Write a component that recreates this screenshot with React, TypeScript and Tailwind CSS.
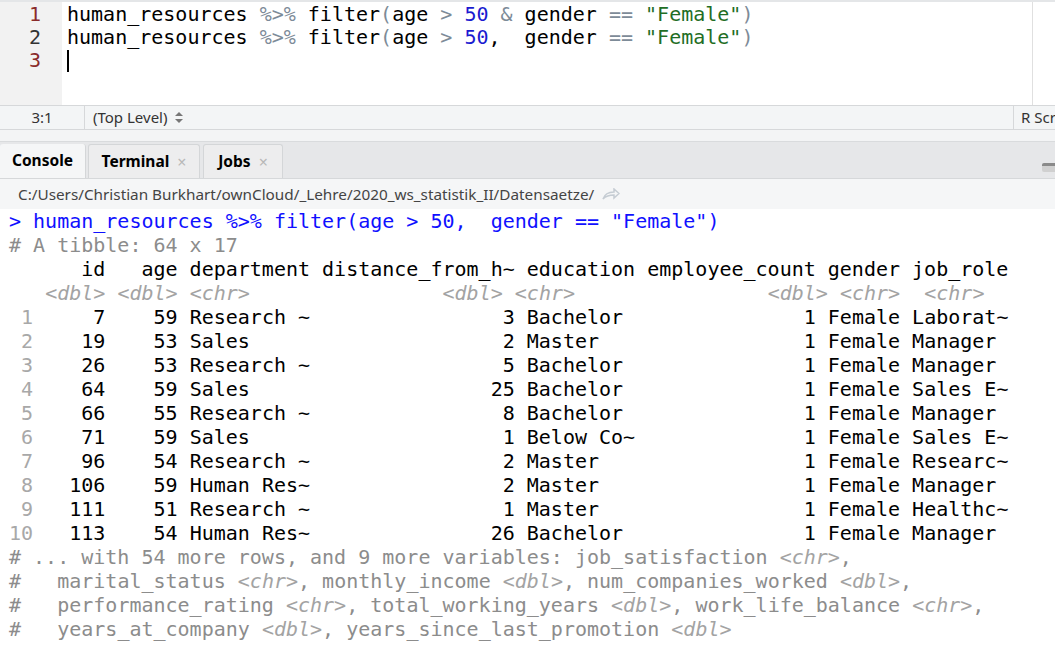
import React from "react";

const mono = "font-['DejaVu_Sans_Mono','Liberation_Mono',monospace] text-[20px]";
const ui = "font-['Segoe_UI','Noto_Sans',sans-serif]";

type Row = [string, string, string, string, string, string, string, string];

const rows: Row[] = [
  ["7", "59", "Research ~", "3", "Bachelor", "1", "Female", "Laborat~"],
  ["19", "53", "Sales", "2", "Master", "1", "Female", "Manager"],
  ["26", "53", "Research ~", "5", "Bachelor", "1", "Female", "Manager"],
  ["64", "59", "Sales", "25", "Bachelor", "1", "Female", "Sales E~"],
  ["66", "55", "Research ~", "8", "Bachelor", "1", "Female", "Manager"],
  ["71", "59", "Sales", "1", "Below Co~", "1", "Female", "Sales E~"],
  ["96", "54", "Research ~", "2", "Master", "1", "Female", "Researc~"],
  ["106", "59", "Human Res~", "2", "Master", "1", "Female", "Manager"],
  ["111", "51", "Research ~", "1", "Master", "1", "Female", "Healthc~"],
  ["113", "54", "Human Res~", "26", "Bachelor", "1", "Female", "Manager"],
];

// tibble column layout: right-aligned numbers, left-aligned text
const fmt = (r: Row) =>
  [
    r[0].padStart(5),
    r[1].padStart(5),
    r[2].padEnd(10),
    r[3].padStart(16),
    r[4].padEnd(9),
    r[5].padStart(14),
    r[6].padEnd(6),
    r[7],
  ].join(" ");

const Op = ({ children }: { children: React.ReactNode }) => (
  <span className="text-[#7d8b98]">{children}</span>
);
const Num = ({ children }: { children: React.ReactNode }) => (
  <span className="text-[#1a1ad0]">{children}</span>
);
const Str = ({ children }: { children: React.ReactNode }) => (
  <span className="text-[#1f6e25]">{children}</span>
);
const T = ({ children }: { children: React.ReactNode }) => (
  <span className="italic text-[#a3a3a3]">{children}</span>
);

const Editor = () => (
  <div className="flex h-[105px] border-t-2 border-[#e4e6e8] bg-white">
    <div className={`w-[62px] bg-[#f2f2f2] pr-[21px] pt-[1px] text-right leading-[23px] ${mono}`}>
      <div className="text-[#8a2b2b]">1</div>
      <div className="text-[#333]">2</div>
      <div className="text-[#8a2b2b]">3</div>
    </div>
    <div className={`flex-1 whitespace-pre pl-[5px] pt-[1px] leading-[23px] text-black ${mono}`}>
      <div>
        human_resources <Op>%&gt;%</Op> filter<Op>(</Op>age <Op>&gt;</Op> <Num>50</Num> <Op>&amp;</Op> gender{" "}
        <Op>==</Op> <Str>"Female"</Str>
        <Op>)</Op>
      </div>
      <div>
        human_resources <Op>%&gt;%</Op> filter<Op>(</Op>age <Op>&gt;</Op> <Num>50</Num>,  gender <Op>==</Op>{" "}
        <Str>"Female"</Str>
        <Op>)</Op>
      </div>
      <div className="flex h-[23px] items-center">
        <div className="h-[22px] w-[2px] bg-black" />
      </div>
    </div>
    <div className="w-[23px] border-l border-[#e0e0e0] bg-white" />
  </div>
);

const StatusBar = () => (
  <div className={`flex h-[25px] items-center border-y border-[#d6d8da] bg-[#f3f5f6] text-[15px] text-[#333] ${ui}`}>
    <div className="flex h-full w-[85px] items-center justify-center border-r border-[#d6d8da]">3:1</div>
    <div className="flex flex-1 items-center gap-2 pl-[8px]">
      (Top Level)
      <svg width="8" height="11" viewBox="0 0 8 11" fill="#777">
        <path d="M4 0 L8 4 H0 Z" />
        <path d="M4 11 L8 7 H0 Z" />
      </svg>
    </div>
    <div className="flex h-full w-[42px] items-center border-l border-[#d6d8da] pl-[7px] whitespace-nowrap overflow-hidden">
      R Script
    </div>
  </div>
);

const Tabs = () => (
  <div className="flex h-[49px] flex-col border-b border-[#d6d8da] bg-[#f3f4f5]">
    <div className="h-[12px] border-b border-[#d9dbdd]" />
    <div className={`flex flex-1 items-end bg-[#e6e7e9] text-[15.5px] font-bold text-black ${ui}`}>
      <div className="flex h-[34px] w-[86px] items-center justify-center rounded-t-[3px] border-r border-[#d4d6d8] bg-[#f5f6f7]">
        Console
      </div>
      <div className="ml-[2px] flex h-[34px] w-[112px] items-center justify-center gap-2 rounded-t-[3px] border border-b-0 border-[#d4d6d8] bg-[#ededee]">
        Terminal <span className="text-[16px] font-normal text-[#b8b8b8]">×</span>
      </div>
      <div className="ml-[3px] flex h-[34px] w-[80px] items-center justify-center gap-2 rounded-t-[3px] border border-b-0 border-[#d4d6d8] bg-[#ededee]">
        Jobs <span className="text-[16px] font-normal text-[#b8b8b8]">×</span>
      </div>
      <div className="flex-1" />
      <div className="mb-[6px] mr-[-2px] h-[9px] w-[15px] rounded-[2px] border-t-[3px] border-[#8a8a8a] bg-[#d0d0d0]" />
    </div>
  </div>
);

const PathBar = () => (
  <div className={`flex h-[31px] items-center gap-2 border-b border-[#d6d8da] bg-[#f5f6f7] pl-[18px] text-[15.3px] text-[#444] ${ui}`}>
    C:/Users/Christian Burkhart/ownCloud/_Lehre/2020_ws_statistik_II/Datensaetze/
    <svg width="18" height="12" viewBox="0 0 18 12" fill="none" stroke="#c5ccd3" strokeWidth="1.5">
      <path d="M1 11 C3 5 7 4 12 4 V1 L17 5.5 L12 10 V7 C7 7 4 8 1 11 Z" />
    </svg>
  </div>
);

const Console = () => (
  <div className={`-mt-[1px] flex-1 whitespace-pre bg-white pl-[9px] leading-[24px] text-black ${mono}`}>
    <div className="text-[#1010ff]">&gt; human_resources %&gt;% filter(age &gt; 50,  gender == "Female")</div>
    <div className="text-[#8c8c8c]"># A tibble: 64 x 17</div>
    <div>{"   " + "id".padStart(5) + " " + "age".padStart(5) + " department distance_from_h~ education employee_count gender job_role"}</div>
    <div>
      {"   "}
      <T>&lt;dbl&gt;</T> <T>&lt;dbl&gt;</T> <T>&lt;chr&gt;</T>
      {"                "}
      <T>&lt;dbl&gt;</T> <T>&lt;chr&gt;</T>
      {"                "}
      <T>&lt;dbl&gt;</T> <T>&lt;chr&gt;</T>
      {"  "}
      <T>&lt;chr&gt;</T>
    </div>
    {rows.map((r, i) => (
      <div key={i}>
        <span className="text-[#a8a8a8]">{String(i + 1).padStart(2)}</span> {fmt(r)}
      </div>
    ))}
    <div className="text-[#8c8c8c]">
      # ... with 54 more rows, and 9 more variables: job_satisfaction <T>&lt;chr&gt;</T>,
    </div>
    <div className="text-[#8c8c8c]">
      {"#   "}marital_status <T>&lt;chr&gt;</T>, monthly_income <T>&lt;dbl&gt;</T>, num_companies_worked{" "}
      <T>&lt;dbl&gt;</T>,
    </div>
    <div className="text-[#8c8c8c]">
      {"#   "}performance_rating <T>&lt;chr&gt;</T>, total_working_years <T>&lt;dbl&gt;</T>, work_life_balance{" "}
      <T>&lt;chr&gt;</T>,
    </div>
    <div className="text-[#8c8c8c]">
      {"#   "}years_at_company <T>&lt;dbl&gt;</T>, years_since_last_promotion <T>&lt;dbl&gt;</T>
    </div>
  </div>
);

export default function App() {
  return (
    <div className="flex h-[645px] w-[1055px] flex-col overflow-hidden bg-white">
      <Editor />
      <StatusBar />
      <Tabs />
      <PathBar />
      <Console />
    </div>
  );
}
